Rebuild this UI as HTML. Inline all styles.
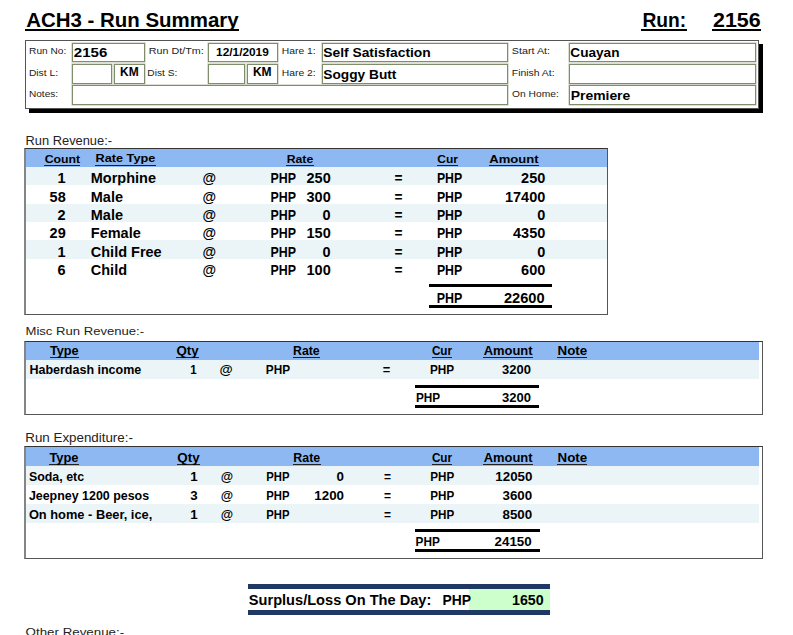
<!DOCTYPE html>
<html><head><meta charset="utf-8"><title>ACH3 - Run Summary</title>
<style>
html,body{margin:0;padding:0;background:#fff;}
body{width:793px;height:635px;overflow:hidden;position:relative;font-family:"Liberation Sans",sans-serif;}
svg{position:absolute;left:0;top:0;}
svg text{font-family:"Liberation Sans",sans-serif;}
</style></head><body>
<div style="position:absolute;left:25.2px;top:29.2px;width:214.0px;height:1.8px;background:#000;"></div>
<div style="position:absolute;left:640.9px;top:29.2px;width:45.8px;height:1.8px;background:#000;"></div>
<div style="position:absolute;left:711.5px;top:29.2px;width:49.7px;height:1.8px;background:#000;"></div>
<div style="position:absolute;left:25px;top:40px;width:734px;height:69px;box-sizing:border-box;border:1px solid #555;background:#fff;box-shadow:4px 4px 0 #000;"></div>
<div style="position:absolute;left:72px;top:43px;width:73px;height:19px;box-sizing:border-box;border:1px solid #7f8d6a;background:#fff;box-shadow:0 0 0 0.6px #c5ccb8;"></div>
<div style="position:absolute;left:72px;top:64px;width:40px;height:20px;box-sizing:border-box;border:1px solid #7f8d6a;background:#fff;box-shadow:0 0 0 0.6px #c5ccb8;"></div>
<div style="position:absolute;left:114px;top:64px;width:31px;height:20px;box-sizing:border-box;border:1px solid #7f8d6a;background:#fff;box-shadow:0 0 0 0.6px #c5ccb8;"></div>
<div style="position:absolute;left:72px;top:85px;width:436px;height:19.5px;box-sizing:border-box;border:1px solid #7f8d6a;background:#fff;box-shadow:0 0 0 0.6px #c5ccb8;"></div>
<div style="position:absolute;left:208px;top:43px;width:70px;height:19px;box-sizing:border-box;border:1px solid #7f8d6a;background:#fff;box-shadow:0 0 0 0.6px #c5ccb8;"></div>
<div style="position:absolute;left:208px;top:64px;width:37px;height:20px;box-sizing:border-box;border:1px solid #7f8d6a;background:#fff;box-shadow:0 0 0 0.6px #c5ccb8;"></div>
<div style="position:absolute;left:247px;top:64px;width:31px;height:20px;box-sizing:border-box;border:1px solid #7f8d6a;background:#fff;box-shadow:0 0 0 0.6px #c5ccb8;"></div>
<div style="position:absolute;left:322px;top:43px;width:186px;height:19px;box-sizing:border-box;border:1px solid #7f8d6a;background:#fff;box-shadow:0 0 0 0.6px #c5ccb8;"></div>
<div style="position:absolute;left:322px;top:64px;width:186px;height:20px;box-sizing:border-box;border:1px solid #7f8d6a;background:#fff;box-shadow:0 0 0 0.6px #c5ccb8;"></div>
<div style="position:absolute;left:569px;top:43px;width:187px;height:19px;box-sizing:border-box;border:1px solid #7f8d6a;background:#fff;box-shadow:0 0 0 0.6px #c5ccb8;"></div>
<div style="position:absolute;left:569px;top:64px;width:187px;height:20px;box-sizing:border-box;border:1px solid #7f8d6a;background:#fff;box-shadow:0 0 0 0.6px #c5ccb8;"></div>
<div style="position:absolute;left:569px;top:85px;width:187px;height:19.5px;box-sizing:border-box;border:1px solid #7f8d6a;background:#fff;box-shadow:0 0 0 0.6px #c5ccb8;"></div>
<div style="position:absolute;left:24px;top:148px;width:584px;height:167px;box-sizing:border-box;border:1px solid #555;background:#fff;border-left:2px solid #858585;border-top-color:#333;"></div>
<div style="position:absolute;left:26px;top:149px;width:581px;height:18px;background:#8EB8F2;"></div>
<div style="position:absolute;left:26px;top:167.0px;width:581px;height:18.33px;background:#EBF5F8;"></div>
<div style="position:absolute;left:26px;top:203.67px;width:581px;height:18.33px;background:#EBF5F8;"></div>
<div style="position:absolute;left:26px;top:240.33px;width:581px;height:18.33px;background:#EBF5F8;"></div>
<div style="position:absolute;left:44.4px;top:164.5px;width:36.1px;height:1.2px;background:#222;"></div>
<div style="position:absolute;left:95.2px;top:164.5px;width:60.5px;height:1.2px;background:#222;"></div>
<div style="position:absolute;left:286.4px;top:164.5px;width:27.2px;height:1.2px;background:#222;"></div>
<div style="position:absolute;left:437.0px;top:164.5px;width:21.3px;height:1.2px;background:#222;"></div>
<div style="position:absolute;left:489.0px;top:164.5px;width:49.9px;height:1.2px;background:#222;"></div>
<div style="position:absolute;left:429px;top:284px;width:123px;height:3px;background:#000;"></div>
<div style="position:absolute;left:429px;top:305px;width:123px;height:3px;background:#000;"></div>
<div style="position:absolute;left:24px;top:341px;width:739px;height:74px;box-sizing:border-box;border:1px solid #555;background:#fff;border-left:2px solid #858585;border-top-color:#333;"></div>
<div style="position:absolute;left:26px;top:342px;width:733px;height:17.7px;background:#8EB8F2;"></div>
<div style="position:absolute;left:26px;top:359.7px;width:733px;height:19px;background:#EBF5F8;"></div>
<div style="position:absolute;left:49.6px;top:356.8px;width:29.3px;height:1.2px;background:#222;"></div>
<div style="position:absolute;left:176.2px;top:356.8px;width:22.8px;height:1.2px;background:#222;"></div>
<div style="position:absolute;left:292.8px;top:356.8px;width:27.2px;height:1.2px;background:#222;"></div>
<div style="position:absolute;left:431.6px;top:356.8px;width:20.8px;height:1.2px;background:#222;"></div>
<div style="position:absolute;left:483.4px;top:356.8px;width:49.5px;height:1.2px;background:#222;"></div>
<div style="position:absolute;left:557.2px;top:356.8px;width:30.3px;height:1.2px;background:#222;"></div>
<div style="position:absolute;left:415px;top:385px;width:123.7px;height:3px;background:#000;"></div>
<div style="position:absolute;left:415px;top:405px;width:123.7px;height:3px;background:#000;"></div>
<div style="position:absolute;left:24px;top:446px;width:739px;height:113px;box-sizing:border-box;border:1px solid #555;background:#fff;border-left:2px solid #858585;border-top-color:#333;"></div>
<div style="position:absolute;left:26px;top:447px;width:733px;height:18.6px;background:#8EB8F2;"></div>
<div style="position:absolute;left:26px;top:465.6px;width:733px;height:19.1px;background:#EBF5F8;"></div>
<div style="position:absolute;left:26px;top:503.7px;width:733px;height:19.0px;background:#EBF5F8;"></div>
<div style="position:absolute;left:49.1px;top:463.6px;width:29.7px;height:1.2px;background:#222;"></div>
<div style="position:absolute;left:177.0px;top:463.6px;width:22.9px;height:1.2px;background:#222;"></div>
<div style="position:absolute;left:293.0px;top:463.6px;width:27.5px;height:1.2px;background:#222;"></div>
<div style="position:absolute;left:431.6px;top:463.6px;width:20.8px;height:1.2px;background:#222;"></div>
<div style="position:absolute;left:483.4px;top:463.6px;width:49.5px;height:1.2px;background:#222;"></div>
<div style="position:absolute;left:557.2px;top:463.6px;width:30.3px;height:1.2px;background:#222;"></div>
<div style="position:absolute;left:414.6px;top:529px;width:125px;height:3px;background:#000;"></div>
<div style="position:absolute;left:414.6px;top:548.5px;width:125px;height:3px;background:#000;"></div>
<div style="position:absolute;left:248px;top:584px;width:302px;height:4.7px;background:#1F3864;"></div>
<div style="position:absolute;left:248px;top:610px;width:302px;height:4.6px;background:#1F3864;"></div>
<div style="position:absolute;left:469px;top:588.7px;width:80.5px;height:21.3px;background:#CCFFCC;"></div>
<svg width="793" height="635" viewBox="0 0 793 635">
<text x="26.20" y="26.50" font-size="20.93" font-weight="700" fill="#000" textLength="212.49" lengthAdjust="spacingAndGlyphs">ACH3 - Run Summary</text>
<text x="642.40" y="26.90" font-size="20.93" font-weight="700" fill="#000" textLength="43.80" lengthAdjust="spacingAndGlyphs">Run:</text>
<text x="713.00" y="26.90" font-size="20.93" font-weight="700" fill="#000" textLength="47.69" lengthAdjust="spacingAndGlyphs">2156</text>
<text x="29.10" y="54.00" font-size="9.74" font-weight="400" fill="#222" textLength="37.20" lengthAdjust="spacingAndGlyphs">Run No:</text>
<text x="28.90" y="75.70" font-size="9.74" font-weight="400" fill="#222" textLength="29.20" lengthAdjust="spacingAndGlyphs">Dist L:</text>
<text x="29.00" y="96.70" font-size="9.74" font-weight="400" fill="#222" textLength="29.10" lengthAdjust="spacingAndGlyphs">Notes:</text>
<text x="148.80" y="54.10" font-size="9.74" font-weight="400" fill="#222" textLength="54.90" lengthAdjust="spacingAndGlyphs">Run Dt/Tm:</text>
<text x="147.30" y="75.70" font-size="9.74" font-weight="400" fill="#222" textLength="30.00" lengthAdjust="spacingAndGlyphs">Dist S:</text>
<text x="281.80" y="54.00" font-size="9.74" font-weight="400" fill="#222" textLength="33.90" lengthAdjust="spacingAndGlyphs">Hare 1:</text>
<text x="281.80" y="75.50" font-size="9.74" font-weight="400" fill="#222" textLength="33.90" lengthAdjust="spacingAndGlyphs">Hare 2:</text>
<text x="511.80" y="54.10" font-size="9.74" font-weight="400" fill="#222" textLength="38.30" lengthAdjust="spacingAndGlyphs">Start At:</text>
<text x="511.80" y="75.50" font-size="9.74" font-weight="400" fill="#222" textLength="42.80" lengthAdjust="spacingAndGlyphs">Finish At:</text>
<text x="512.10" y="96.60" font-size="9.74" font-weight="400" fill="#222" textLength="46.70" lengthAdjust="spacingAndGlyphs">On Home:</text>
<text x="73.80" y="57.30" font-size="13.66" font-weight="700" fill="#000" textLength="33.49" lengthAdjust="spacingAndGlyphs">2156</text>
<text x="120.00" y="76.30" font-size="12.06" font-weight="700" fill="#000" textLength="18.60" lengthAdjust="spacingAndGlyphs">KM</text>
<text x="216.10" y="55.60" font-size="11.77" font-weight="700" fill="#000" textLength="52.70" lengthAdjust="spacingAndGlyphs">12/1/2019</text>
<text x="252.90" y="76.30" font-size="12.06" font-weight="700" fill="#000" textLength="18.70" lengthAdjust="spacingAndGlyphs">KM</text>
<text x="323.30" y="57.10" font-size="13.66" font-weight="700" fill="#000" textLength="107.40" lengthAdjust="spacingAndGlyphs">Self Satisfaction</text>
<text x="323.30" y="78.80" font-size="13.66" font-weight="700" fill="#000" textLength="73.09" lengthAdjust="spacingAndGlyphs">Soggy Butt</text>
<text x="570.30" y="57.40" font-size="13.23" font-weight="700" fill="#000" textLength="49.20" lengthAdjust="spacingAndGlyphs">Cuayan</text>
<text x="570.70" y="99.80" font-size="12.79" font-weight="700" fill="#000" textLength="59.60" lengthAdjust="spacingAndGlyphs">Premiere</text>
<text x="25.60" y="144.70" font-size="12.06" font-weight="400" fill="#222" textLength="86.40" lengthAdjust="spacingAndGlyphs">Run Revenue:-</text>
<text x="44.70" y="162.60" font-size="11.34" font-weight="700" fill="#000" textLength="35.50" lengthAdjust="spacingAndGlyphs">Count</text>
<text x="95.50" y="162.40" font-size="11.34" font-weight="700" fill="#000" textLength="59.90" lengthAdjust="spacingAndGlyphs">Rate Type</text>
<text x="286.70" y="162.80" font-size="11.34" font-weight="700" fill="#000" textLength="26.59" lengthAdjust="spacingAndGlyphs">Rate</text>
<text x="437.30" y="162.80" font-size="11.34" font-weight="700" fill="#000" textLength="20.70" lengthAdjust="spacingAndGlyphs">Cur</text>
<text x="489.30" y="162.80" font-size="11.34" font-weight="700" fill="#000" textLength="49.30" lengthAdjust="spacingAndGlyphs">Amount</text>
<text x="505.00" y="201.50" font-size="13.81" font-weight="700" fill="#000" textLength="40.30" lengthAdjust="spacingAndGlyphs">17400</text>
<text x="57.64" y="183.20" font-size="13.81" font-weight="700" fill="#000" textLength="8.06" lengthAdjust="spacingAndGlyphs">1</text>
<text x="90.80" y="183.20" font-size="13.81" font-weight="700" fill="#000" textLength="65.20" lengthAdjust="spacingAndGlyphs">Morphine</text>
<text x="202.60" y="183.20" font-size="13.81" font-weight="700" fill="#000" textLength="13.60" lengthAdjust="spacingAndGlyphs">@</text>
<text x="270.60" y="183.20" font-size="13.81" font-weight="700" fill="#000" textLength="25.50" lengthAdjust="spacingAndGlyphs">PHP</text>
<text x="306.53" y="183.20" font-size="13.81" font-weight="700" fill="#000" textLength="24.18" lengthAdjust="spacingAndGlyphs">250</text>
<text x="394.60" y="183.20" font-size="13.81" font-weight="700" fill="#000" textLength="8.00" lengthAdjust="spacingAndGlyphs">=</text>
<text x="436.90" y="183.20" font-size="13.81" font-weight="700" fill="#000" textLength="25.30" lengthAdjust="spacingAndGlyphs">PHP</text>
<text x="521.13" y="183.20" font-size="13.81" font-weight="700" fill="#000" textLength="24.18" lengthAdjust="spacingAndGlyphs">250</text>
<text x="49.59" y="201.53" font-size="13.81" font-weight="700" fill="#000" textLength="16.12" lengthAdjust="spacingAndGlyphs">58</text>
<text x="90.80" y="201.53" font-size="13.81" font-weight="700" fill="#000" textLength="32.22" lengthAdjust="spacingAndGlyphs">Male</text>
<text x="202.60" y="201.53" font-size="13.81" font-weight="700" fill="#000" textLength="13.60" lengthAdjust="spacingAndGlyphs">@</text>
<text x="270.60" y="201.53" font-size="13.81" font-weight="700" fill="#000" textLength="25.50" lengthAdjust="spacingAndGlyphs">PHP</text>
<text x="306.53" y="201.53" font-size="13.81" font-weight="700" fill="#000" textLength="24.18" lengthAdjust="spacingAndGlyphs">300</text>
<text x="394.60" y="201.53" font-size="13.81" font-weight="700" fill="#000" textLength="8.00" lengthAdjust="spacingAndGlyphs">=</text>
<text x="436.90" y="201.53" font-size="13.81" font-weight="700" fill="#000" textLength="25.30" lengthAdjust="spacingAndGlyphs">PHP</text>
<text x="57.64" y="219.87" font-size="13.81" font-weight="700" fill="#000" textLength="8.06" lengthAdjust="spacingAndGlyphs">2</text>
<text x="90.80" y="219.87" font-size="13.81" font-weight="700" fill="#000" textLength="32.22" lengthAdjust="spacingAndGlyphs">Male</text>
<text x="202.60" y="219.87" font-size="13.81" font-weight="700" fill="#000" textLength="13.60" lengthAdjust="spacingAndGlyphs">@</text>
<text x="270.60" y="219.87" font-size="13.81" font-weight="700" fill="#000" textLength="25.50" lengthAdjust="spacingAndGlyphs">PHP</text>
<text x="322.64" y="219.87" font-size="13.81" font-weight="700" fill="#000" textLength="8.06" lengthAdjust="spacingAndGlyphs">0</text>
<text x="394.60" y="219.87" font-size="13.81" font-weight="700" fill="#000" textLength="8.00" lengthAdjust="spacingAndGlyphs">=</text>
<text x="436.90" y="219.87" font-size="13.81" font-weight="700" fill="#000" textLength="25.30" lengthAdjust="spacingAndGlyphs">PHP</text>
<text x="537.24" y="219.87" font-size="13.81" font-weight="700" fill="#000" textLength="8.06" lengthAdjust="spacingAndGlyphs">0</text>
<text x="49.59" y="238.20" font-size="13.81" font-weight="700" fill="#000" textLength="16.12" lengthAdjust="spacingAndGlyphs">29</text>
<text x="90.80" y="238.20" font-size="13.81" font-weight="700" fill="#000" textLength="49.94" lengthAdjust="spacingAndGlyphs">Female</text>
<text x="202.60" y="238.20" font-size="13.81" font-weight="700" fill="#000" textLength="13.60" lengthAdjust="spacingAndGlyphs">@</text>
<text x="270.60" y="238.20" font-size="13.81" font-weight="700" fill="#000" textLength="25.50" lengthAdjust="spacingAndGlyphs">PHP</text>
<text x="306.53" y="238.20" font-size="13.81" font-weight="700" fill="#000" textLength="24.18" lengthAdjust="spacingAndGlyphs">150</text>
<text x="394.60" y="238.20" font-size="13.81" font-weight="700" fill="#000" textLength="8.00" lengthAdjust="spacingAndGlyphs">=</text>
<text x="436.90" y="238.20" font-size="13.81" font-weight="700" fill="#000" textLength="25.30" lengthAdjust="spacingAndGlyphs">PHP</text>
<text x="513.06" y="238.20" font-size="13.81" font-weight="700" fill="#000" textLength="32.24" lengthAdjust="spacingAndGlyphs">4350</text>
<text x="57.64" y="256.53" font-size="13.81" font-weight="700" fill="#000" textLength="8.06" lengthAdjust="spacingAndGlyphs">1</text>
<text x="90.80" y="256.53" font-size="13.81" font-weight="700" fill="#000" textLength="70.86" lengthAdjust="spacingAndGlyphs">Child Free</text>
<text x="202.60" y="256.53" font-size="13.81" font-weight="700" fill="#000" textLength="13.60" lengthAdjust="spacingAndGlyphs">@</text>
<text x="270.60" y="256.53" font-size="13.81" font-weight="700" fill="#000" textLength="25.50" lengthAdjust="spacingAndGlyphs">PHP</text>
<text x="322.64" y="256.53" font-size="13.81" font-weight="700" fill="#000" textLength="8.06" lengthAdjust="spacingAndGlyphs">0</text>
<text x="394.60" y="256.53" font-size="13.81" font-weight="700" fill="#000" textLength="8.00" lengthAdjust="spacingAndGlyphs">=</text>
<text x="436.90" y="256.53" font-size="13.81" font-weight="700" fill="#000" textLength="25.30" lengthAdjust="spacingAndGlyphs">PHP</text>
<text x="537.24" y="256.53" font-size="13.81" font-weight="700" fill="#000" textLength="8.06" lengthAdjust="spacingAndGlyphs">0</text>
<text x="57.64" y="274.87" font-size="13.81" font-weight="700" fill="#000" textLength="8.06" lengthAdjust="spacingAndGlyphs">6</text>
<text x="90.80" y="274.87" font-size="13.81" font-weight="700" fill="#000" textLength="36.22" lengthAdjust="spacingAndGlyphs">Child</text>
<text x="202.60" y="274.87" font-size="13.81" font-weight="700" fill="#000" textLength="13.60" lengthAdjust="spacingAndGlyphs">@</text>
<text x="270.60" y="274.87" font-size="13.81" font-weight="700" fill="#000" textLength="25.50" lengthAdjust="spacingAndGlyphs">PHP</text>
<text x="306.53" y="274.87" font-size="13.81" font-weight="700" fill="#000" textLength="24.18" lengthAdjust="spacingAndGlyphs">100</text>
<text x="394.60" y="274.87" font-size="13.81" font-weight="700" fill="#000" textLength="8.00" lengthAdjust="spacingAndGlyphs">=</text>
<text x="436.90" y="274.87" font-size="13.81" font-weight="700" fill="#000" textLength="25.30" lengthAdjust="spacingAndGlyphs">PHP</text>
<text x="521.13" y="274.87" font-size="13.81" font-weight="700" fill="#000" textLength="24.18" lengthAdjust="spacingAndGlyphs">600</text>
<rect x="88" y="185.33" width="75" height="3" fill="#fff"/>
<text x="436.80" y="303.00" font-size="13.81" font-weight="700" fill="#000" textLength="25.60" lengthAdjust="spacingAndGlyphs">PHP</text>
<text x="503.90" y="303.00" font-size="13.81" font-weight="700" fill="#000" textLength="40.70" lengthAdjust="spacingAndGlyphs">22600</text>
<text x="25.50" y="335.40" font-size="11.48" font-weight="400" fill="#222" textLength="118.60" lengthAdjust="spacingAndGlyphs">Misc Run Revenue:-</text>
<text x="49.90" y="355.00" font-size="11.92" font-weight="700" fill="#000" textLength="28.70" lengthAdjust="spacingAndGlyphs">Type</text>
<text x="176.50" y="355.10" font-size="11.92" font-weight="700" fill="#000" textLength="22.20" lengthAdjust="spacingAndGlyphs">Qty</text>
<text x="293.10" y="355.20" font-size="11.92" font-weight="700" fill="#000" textLength="26.59" lengthAdjust="spacingAndGlyphs">Rate</text>
<text x="431.90" y="355.30" font-size="11.92" font-weight="700" fill="#000" textLength="20.20" lengthAdjust="spacingAndGlyphs">Cur</text>
<text x="483.70" y="355.30" font-size="11.92" font-weight="700" fill="#000" textLength="48.90" lengthAdjust="spacingAndGlyphs">Amount</text>
<text x="557.50" y="355.30" font-size="11.92" font-weight="700" fill="#000" textLength="29.70" lengthAdjust="spacingAndGlyphs">Note</text>
<text x="502.00" y="374.00" font-size="11.92" font-weight="700" fill="#000" textLength="28.90" lengthAdjust="spacingAndGlyphs">3200</text>
<text x="29.40" y="374.10" font-size="11.92" font-weight="700" fill="#000" textLength="111.90" lengthAdjust="spacingAndGlyphs">Haberdash income</text>
<text x="190.20" y="374.20" font-size="11.92" font-weight="700" fill="#000" textLength="6.40" lengthAdjust="spacingAndGlyphs">1</text>
<text x="219.40" y="374.20" font-size="11.92" font-weight="700" fill="#000" textLength="13.20" lengthAdjust="spacingAndGlyphs">@</text>
<text x="265.80" y="374.20" font-size="11.92" font-weight="700" fill="#000" textLength="24.20" lengthAdjust="spacingAndGlyphs">PHP</text>
<text x="382.80" y="374.00" font-size="11.92" font-weight="700" fill="#000" textLength="7.50" lengthAdjust="spacingAndGlyphs">=</text>
<text x="429.90" y="374.00" font-size="11.92" font-weight="700" fill="#000" textLength="24.20" lengthAdjust="spacingAndGlyphs">PHP</text>
<text x="416.00" y="402.40" font-size="11.92" font-weight="700" fill="#000" textLength="24.20" lengthAdjust="spacingAndGlyphs">PHP</text>
<text x="502.00" y="402.40" font-size="11.92" font-weight="700" fill="#000" textLength="29.00" lengthAdjust="spacingAndGlyphs">3200</text>
<text x="25.30" y="441.50" font-size="12.06" font-weight="400" fill="#222" textLength="107.60" lengthAdjust="spacingAndGlyphs">Run Expenditure:-</text>
<text x="49.40" y="461.90" font-size="11.92" font-weight="700" fill="#000" textLength="29.10" lengthAdjust="spacingAndGlyphs">Type</text>
<text x="177.30" y="462.00" font-size="11.92" font-weight="700" fill="#000" textLength="22.30" lengthAdjust="spacingAndGlyphs">Qty</text>
<text x="293.30" y="462.10" font-size="11.92" font-weight="700" fill="#000" textLength="26.89" lengthAdjust="spacingAndGlyphs">Rate</text>
<text x="431.90" y="462.20" font-size="11.92" font-weight="700" fill="#000" textLength="20.20" lengthAdjust="spacingAndGlyphs">Cur</text>
<text x="483.70" y="462.20" font-size="11.92" font-weight="700" fill="#000" textLength="48.90" lengthAdjust="spacingAndGlyphs">Amount</text>
<text x="557.50" y="462.20" font-size="11.92" font-weight="700" fill="#000" textLength="29.70" lengthAdjust="spacingAndGlyphs">Note</text>
<text x="495.30" y="480.50" font-size="11.92" font-weight="700" fill="#000" textLength="37.10" lengthAdjust="spacingAndGlyphs">12050</text>
<text x="28.90" y="480.60" font-size="11.92" font-weight="700" fill="#000" textLength="55.20" lengthAdjust="spacingAndGlyphs">Soda, etc</text>
<text x="190.18" y="480.60" font-size="11.92" font-weight="700" fill="#000" textLength="7.42" lengthAdjust="spacingAndGlyphs">1</text>
<text x="220.80" y="480.60" font-size="11.92" font-weight="700" fill="#000" textLength="12.40" lengthAdjust="spacingAndGlyphs">@</text>
<text x="266.30" y="480.60" font-size="11.92" font-weight="700" fill="#000" textLength="23.20" lengthAdjust="spacingAndGlyphs">PHP</text>
<text x="336.58" y="480.60" font-size="11.92" font-weight="700" fill="#000" textLength="7.42" lengthAdjust="spacingAndGlyphs">0</text>
<text x="384.00" y="480.60" font-size="11.92" font-weight="700" fill="#000" textLength="7.00" lengthAdjust="spacingAndGlyphs">=</text>
<text x="430.30" y="480.60" font-size="11.92" font-weight="700" fill="#000" textLength="23.90" lengthAdjust="spacingAndGlyphs">PHP</text>
<text x="28.90" y="499.60" font-size="11.92" font-weight="700" fill="#000" textLength="120.20" lengthAdjust="spacingAndGlyphs">Jeepney 1200 pesos</text>
<text x="190.18" y="499.60" font-size="11.92" font-weight="700" fill="#000" textLength="7.42" lengthAdjust="spacingAndGlyphs">3</text>
<text x="220.80" y="499.60" font-size="11.92" font-weight="700" fill="#000" textLength="12.40" lengthAdjust="spacingAndGlyphs">@</text>
<text x="266.30" y="499.60" font-size="11.92" font-weight="700" fill="#000" textLength="23.20" lengthAdjust="spacingAndGlyphs">PHP</text>
<text x="314.32" y="499.60" font-size="11.92" font-weight="700" fill="#000" textLength="29.68" lengthAdjust="spacingAndGlyphs">1200</text>
<text x="384.00" y="499.60" font-size="11.92" font-weight="700" fill="#000" textLength="7.00" lengthAdjust="spacingAndGlyphs">=</text>
<text x="430.30" y="499.60" font-size="11.92" font-weight="700" fill="#000" textLength="23.90" lengthAdjust="spacingAndGlyphs">PHP</text>
<text x="502.52" y="499.60" font-size="11.92" font-weight="700" fill="#000" textLength="29.68" lengthAdjust="spacingAndGlyphs">3600</text>
<text x="28.90" y="518.60" font-size="11.92" font-weight="700" fill="#000" textLength="123.40" lengthAdjust="spacingAndGlyphs">On home - Beer, ice,</text>
<text x="190.18" y="518.60" font-size="11.92" font-weight="700" fill="#000" textLength="7.42" lengthAdjust="spacingAndGlyphs">1</text>
<text x="220.80" y="518.60" font-size="11.92" font-weight="700" fill="#000" textLength="12.40" lengthAdjust="spacingAndGlyphs">@</text>
<text x="266.30" y="518.60" font-size="11.92" font-weight="700" fill="#000" textLength="23.20" lengthAdjust="spacingAndGlyphs">PHP</text>
<text x="384.00" y="518.60" font-size="11.92" font-weight="700" fill="#000" textLength="7.00" lengthAdjust="spacingAndGlyphs">=</text>
<text x="430.30" y="518.60" font-size="11.92" font-weight="700" fill="#000" textLength="23.90" lengthAdjust="spacingAndGlyphs">PHP</text>
<text x="502.52" y="518.60" font-size="11.92" font-weight="700" fill="#000" textLength="29.68" lengthAdjust="spacingAndGlyphs">8500</text>
<text x="415.60" y="545.90" font-size="11.92" font-weight="700" fill="#000" textLength="24.20" lengthAdjust="spacingAndGlyphs">PHP</text>
<text x="494.60" y="545.90" font-size="11.92" font-weight="700" fill="#000" textLength="37.10" lengthAdjust="spacingAndGlyphs">24150</text>
<text x="248.80" y="604.60" font-size="14.83" font-weight="700" fill="#000" textLength="182.50" lengthAdjust="spacingAndGlyphs">Surplus/Loss On The Day:</text>
<text x="442.40" y="604.60" font-size="14.83" font-weight="700" fill="#000" textLength="28.60" lengthAdjust="spacingAndGlyphs">PHP</text>
<text x="512.00" y="604.60" font-size="14.83" font-weight="700" fill="#000" textLength="31.69" lengthAdjust="spacingAndGlyphs">1650</text>
<text x="25.60" y="636.00" font-size="11.63" font-weight="400" fill="#222" textLength="98.59" lengthAdjust="spacingAndGlyphs">Other Revenue:-</text>
</svg>
</body></html>
